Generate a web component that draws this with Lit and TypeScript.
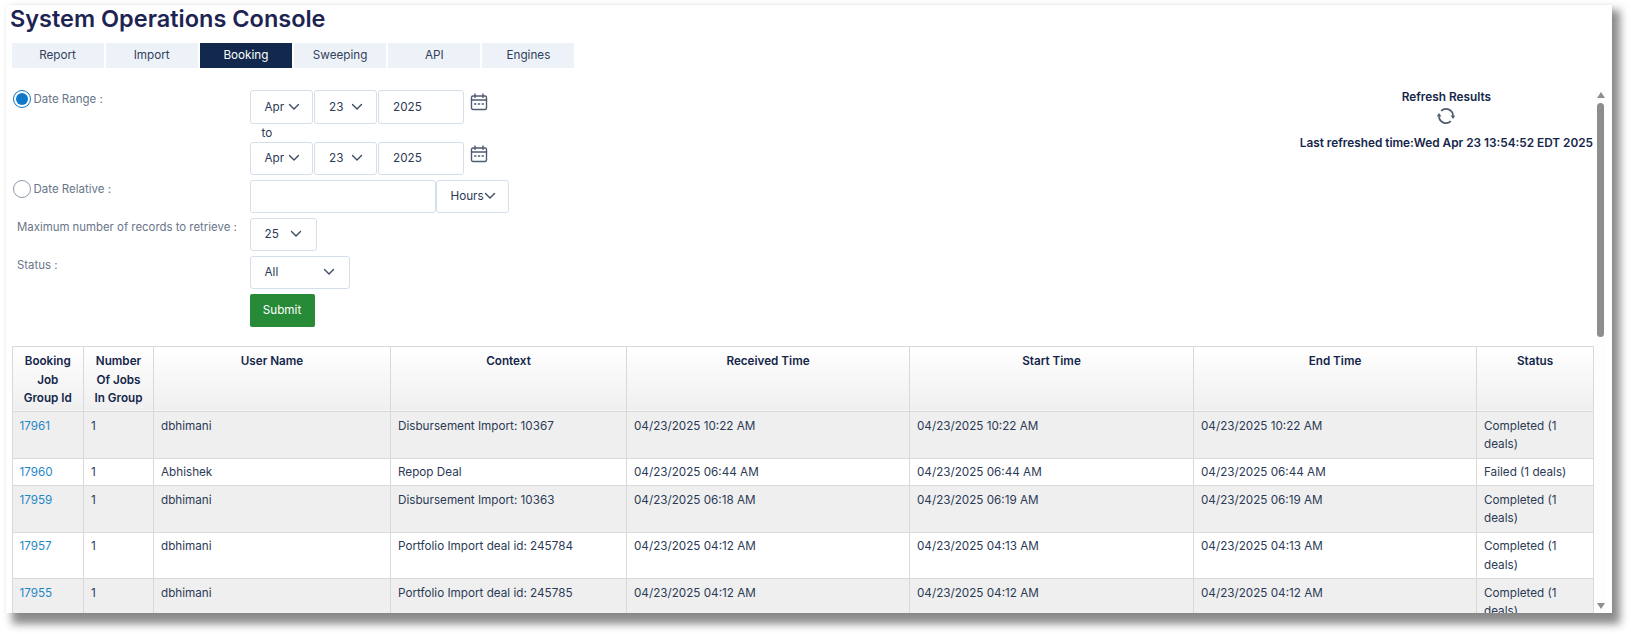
import { LitElement, html, css, svg } from "lit";
import { customElement } from "lit/decorators.js";

const chevron = html`<svg class="chev" viewBox="0 0 12 8" fill="none" stroke="currentColor" stroke-width="1.4" stroke-linecap="round" stroke-linejoin="round"><path d="M1.5 1.5 6 6l4.5-4.5"/></svg>`;

const calendar = html`<svg class="cal" viewBox="0 0 18 18" fill="none" stroke="#4f5b70" stroke-width="1.4" stroke-linecap="round">
  <rect x="1.5" y="3" width="15" height="13.5" rx="1.5"/>
  <path d="M1.5 7h15M5 1v3.4M13 1v3.4"/>
  <path d="M4.6 11h1.2M8.4 11h1.2M12.2 11h1.2" stroke-width="1.5"/>
</svg>`;

const refresh = html`<svg class="refresh" viewBox="0 0 18 18" fill="none" stroke="#4f5b70" stroke-width="1.7">
  <path d="M4.2 3.8A7 7 0 0 1 16 8.6"/>
  <path d="M13.8 14.2A7 7 0 0 1 2 9.4"/>
  ${svg`<path d="M13.6 8.4h4.8L16 12z" fill="#4f5b70" stroke="none"/><path d="M-.4 9.6h4.8L2 6z" fill="#4f5b70" stroke="none"/>`}
</svg>`;

const rows = [
  ["17961", "dbhimani", "Disbursement Import: 10367", "04/23/2025 10:22 AM", "04/23/2025 10:22 AM", "04/23/2025 10:22 AM", "Completed (1 deals)"],
  ["17960", "Abhishek", "Repop Deal", "04/23/2025 06:44 AM", "04/23/2025 06:44 AM", "04/23/2025 06:44 AM", "Failed (1 deals)"],
  ["17959", "dbhimani", "Disbursement Import: 10363", "04/23/2025 06:18 AM", "04/23/2025 06:19 AM", "04/23/2025 06:19 AM", "Completed (1 deals)"],
  ["17957", "dbhimani", "Portfolio Import deal id: 245784", "04/23/2025 04:12 AM", "04/23/2025 04:13 AM", "04/23/2025 04:13 AM", "Completed (1 deals)"],
  ["17955", "dbhimani", "Portfolio Import deal id: 245785", "04/23/2025 04:12 AM", "04/23/2025 04:12 AM", "04/23/2025 04:12 AM", "Completed (1 deals)"],
];

const tabs = ["Report", "Import", "Booking", "Sweeping", "API", "Engines"];

@customElement("app-root")
export class AppRoot extends LitElement {
  static styles = css`
    :host {
      display: block;
      height: 634px;
      font-family: Inter, "Liberation Sans", sans-serif;
      font-size: 11.7px;
      color: #2b3a55;
      background: #fff;
      overflow: hidden;
    }
    .stack {
      position: relative;
      height: 634px;
    }
    .window {
      position: relative;
      box-sizing: border-box;
      margin: 0;
      left: 6px;
      top: 5px;
      width: 1606px;
      height: 608px;
      background: #fff;
      overflow: hidden;
      box-shadow: 0 0 3px rgba(0, 0, 0, 0.06);
    }
    .shadow {
      position: absolute;
      left: 12px;
      top: 10px;
      width: 1608px;
      height: 614px;
      background: #8b8b8b;
      filter: blur(4px);
    }
    h1 {
      margin: 0;
      padding-left: 4px;
      font-size: 23.5px;
      line-height: 28px;
      font-weight: 600;
      color: #1e2452;
    }
    .tabs {
      display: flex;
      gap: 2.2px;
      margin: 9.5px 0 0 5.5px;
    }
    .tab {
      width: 92px;
      height: 25px;
      display: flex;
      align-items: center;
      justify-content: center;
      background: #edf2f8;
      color: #33415c;
    }
    .tab.active {
      background: #12284c;
      color: #fff;
    }
    .main {
      display: flex;
      justify-content: space-between;
      margin-top: 22.5px;
    }
    .form {
      display: grid;
      grid-template-columns: 238px auto;
      justify-content: start;
      row-gap: 4.5px;
      padding-left: 5.5px;
    }
    .label {
      display: flex;
      align-items: center;
      gap: 3px;
      align-self: start;
      height: 18px;
      margin-left: 1px;
      color: #69758a;
      font-size: 11.5px;
    }
    .label.plain {
      padding-left: 4.5px;
      font-size: 11.4px;
    }
    .radio {
      box-sizing: border-box;
      flex: none;
      width: 18px;
      height: 18px;
      border-radius: 50%;
      border: 1px solid #8f99a8;
      background: #fff;
      display: flex;
      align-items: center;
      justify-content: center;
    }
    .radio.on {
      border: 1.5px solid #0f78c8;
    }
    .radio.on::after {
      content: "";
      width: 12px;
      height: 12px;
      border-radius: 50%;
      background: #0f78c8;
    }
    .controls {
      display: flex;
      flex-direction: column;
      align-items: flex-start;
    }
    .line {
      display: flex;
      align-items: flex-start;
      gap: 1.5px;
    }
    .to {
      height: 18px;
      line-height: 18px;
      padding-left: 12px;
    }
    .box {
      box-sizing: border-box;
      height: 33.5px;
      display: flex;
      align-items: center;
      justify-content: space-between;
      padding: 0 13px 0 14px;
      border: 1px solid #d5dfec;
      border-radius: 3px;
      background: #fff;
      color: #2b3a55;
    }
    .chev {
      width: 12px;
      height: 8px;
      flex: none;
      color: #3d4a60;
    }
    .m { width: 63px; padding-right: 12px; }
    .d { width: 62.5px; }
    .y { width: 85.5px; }
    .cal {
      width: 18px;
      height: 18px;
      margin: 3px 0 0 5px;
      flex: none;
    }
    .joined {
      gap: 0;
    }
    .rel { width: 186px; }
    .hours { width: 73px; justify-content: flex-start; padding-right: 0; }
    .max { width: 67px; padding-right: 14px; }
    .all { width: 100px; padding-right: 14px; }
    .submit {
      box-sizing: border-box;
      width: 65px;
      height: 33px;
      display: flex;
      align-items: center;
      justify-content: center;
      background: #278a37;
      border-radius: 2px;
      color: #fff;
    }
    .refresh-panel {
      display: flex;
      flex-direction: column;
      align-items: center;
      margin: -2px 19px 0 0;
      font-size: 11.8px;
      font-weight: 600;
      color: #14264a;
      line-height: 19px;
    }
    .refresh {
      width: 18px;
      height: 18px;
      margin: 0 0 8.5px;
    }
    table {
      margin: 19px 0 0 5.5px;
      width: 1581.5px;
      border-collapse: collapse;
      table-layout: fixed;
      line-height: 18.7px;
    }
    th, td {
      border: 1px solid #d9d9d9;
      vertical-align: top;
      text-align: left;
      padding: 4.5px 7px 3.5px;
      font-weight: 400;
    }
    th {
      text-align: center;
      font-weight: 600;
      color: #14264a;
      padding-top: 5.5px;
      padding-bottom: 3px;
      background: linear-gradient(#fff, #efefef);
    }
    tbody tr:nth-child(odd) td {
      background: #efefef;
    }
    a {
      color: #1f87c8;
      text-decoration: none;
    }
    .c1 { width: 71.5px; }
    .c2 { width: 70px; }
    .c3 { width: 237px; }
    .c4 { width: 236px; }
    .c5 { width: 283px; }
    .c6 { width: 284px; }
    .c7 { width: 283px; }
    .c8 { width: 117px; }
    .scrollbar {
      position: absolute;
      top: 84px;
      bottom: 0;
      right: 6px;
      width: 11px;
      display: flex;
      flex-direction: column;
      align-items: center;
      background: #fdfdfd;
    }
    .arrow-up, .arrow-down {
      flex: none;
      width: 0;
      height: 0;
      border-left: 4px solid transparent;
      border-right: 4px solid transparent;
    }
    .arrow-up {
      margin-top: 3px;
      border-bottom: 6px solid #8e8e8e;
    }
    .arrow-down {
      position: absolute;
      bottom: 4px;
      border-top: 6px solid #8e8e8e;
    }
    .thumb {
      margin-top: 5px;
      width: 7.5px;
      height: 234px;
      border-radius: 4px;
      background: #8e8e8e;
    }
  `;

  private select(cls: string, text: string) {
    return html`<div class="box ${cls}"><span>${text}</span>${chevron}</div>`;
  }

  private dateLine() {
    return html`<div class="line">
      ${this.select("m", "Apr")}${this.select("d", "23")}
      <div class="box y">2025</div>
      ${calendar}
    </div>`;
  }

  render() {
    return html`
      <div class="stack">
        <div class="shadow"></div>
        <div class="window">
          <h1>System Operations Console</h1>
          <div class="tabs">
            ${tabs.map((t) => html`<div class="tab ${t === "Booking" ? "active" : ""}">${t}</div>`)}
          </div>
          <div class="main">
            <div class="form">
              <div class="label"><span class="radio on"></span>Date Range :</div>
              <div class="controls">
                ${this.dateLine()}
                <div class="to">to</div>
                ${this.dateLine()}
              </div>
              <div class="label"><span class="radio"></span>Date Relative :</div>
              <div class="line joined">
                <div class="box rel"></div>
                ${this.select("hours", "Hours")}
              </div>
              <div class="label plain">Maximum number of records to retrieve :</div>
              <div class="controls">${this.select("max", "25")}</div>
              <div class="label plain">Status :</div>
              <div class="controls">${this.select("all", "All")}</div>
              <div></div>
              <div class="controls"><div class="submit">Submit</div></div>
            </div>
            <div class="refresh-panel">
              <div>Refresh Results</div>
              ${refresh}
              <div>Last refreshed time:Wed Apr 23 13:54:52 EDT 2025</div>
            </div>
          </div>
          <table>
            <colgroup>
              <col class="c1" /><col class="c2" /><col class="c3" /><col class="c4" />
              <col class="c5" /><col class="c6" /><col class="c7" /><col class="c8" />
            </colgroup>
            <thead>
              <tr>
                <th>Booking Job Group Id</th>
                <th>Number Of Jobs In Group</th>
                <th>User Name</th>
                <th>Context</th>
                <th>Received Time</th>
                <th>Start Time</th>
                <th>End Time</th>
                <th>Status</th>
              </tr>
            </thead>
            <tbody>
              ${rows.map(
                (r) => html`<tr>
                  <td><a>${r[0]}</a></td>
                  <td>1</td>
                  <td>${r[1]}</td>
                  <td>${r[2]}</td>
                  <td>${r[3]}</td>
                  <td>${r[4]}</td>
                  <td>${r[5]}</td>
                  <td>${r[6]}</td>
                </tr>`
              )}
            </tbody>
          </table>
          <div class="scrollbar">
            <div class="arrow-up"></div>
            <div class="thumb"></div>
            <div class="arrow-down"></div>
          </div>
        </div>
      </div>
    `;
  }
}
